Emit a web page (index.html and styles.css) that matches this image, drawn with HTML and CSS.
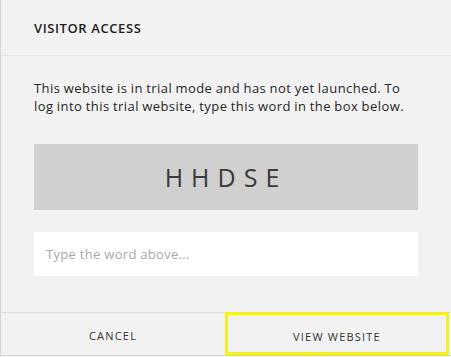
FILE: index.html
```html
<!DOCTYPE html>
<html>
  <head>
    <title>Visitor Access</title>
    <link rel="stylesheet" href="styles.css">
  </head>

  <body>
    <div class="dialog">
      <div class="dialog-header">
        <h2>VISITOR ACCESS</h2>
      </div>
      <div class="dialog-body">
        <p class="intro">
          This website is in trial mode and has not yet launched. To<br />
          log into this trial website, type this word in the box below.
        </p>
        <div class="captcha">HHDSE</div>
        <input
          type="text"
          class="word-input"
          name="word"
          placeholder="Type the word above..."
        />
      </div>
      <div class="dialog-footer">
        <button type="button" class="footer-button">CANCEL</button>
        <button type="button" class="footer-button active">VIEW WEBSITE</button>
      </div>
    </div>
  </body>
</html>
```

FILE: styles.css
```css
body {
  font-family: "Open Sans", "Lato", sans-serif;
  background-color: #f2f2f2;
  margin: 0;
}

.dialog {
  height: 356px;
  border-left: 1px solid #d4d4d4;
  background: #f2f2f2;
  display: flex;
  flex-direction: column;
  box-sizing: border-box;
}

.dialog-header {
  height: 56px;
  border-bottom: 1px solid #e2e2e2;
  padding-left: 33px;
  display: flex;
  align-items: center;
  box-sizing: border-box;
}

.dialog-header h2 {
  margin: 0;
  font-size: 13px;
  font-weight: 600;
  letter-spacing: 0.6px;
  color: #222;
}

.dialog-body {
  flex: 1;
  padding: 23px 33px 0 33px;
}

.intro {
  margin: 0 0 29px 0;
  font-size: 13px;
  line-height: 18px;
  letter-spacing: 0.45px;
  word-spacing: -0.5px;
  color: #262626;
}

.captcha {
  height: 66px;
  background: #d0d0d0;
  display: flex;
  justify-content: center;
  align-items: center;
  font-size: 25px;
  letter-spacing: 8px;
  color: #3a3a3a;
}

.word-input {
  display: block;
  width: 100%;
  height: 44px;
  margin-top: 22px;
  padding: 0 12px;
  border: none;
  background: white;
  box-sizing: border-box;
  font-family: inherit;
  font-size: 13px;
  letter-spacing: 0.3px;
  outline: none;
}

.word-input::placeholder {
  color: #a8a8a8;
}

.dialog-footer {
  display: grid;
  grid-template-columns: 1fr 1fr;
  height: 44px;
  padding-right: 2px;
  border-top: 1px solid #dcdcdc;
  border-bottom: 1px solid #d4d4d4;
  box-sizing: border-box;
}

.footer-button {
  background: transparent;
  border: none;
  padding: 3px 0 0 0;
  font-family: inherit;
  font-size: 11px;
  font-weight: 500;
  letter-spacing: 1.2px;
  color: #333;
  cursor: pointer;
}

.footer-button.active {
  margin-top: -1px;
  border: 3px solid #f5ee2a;
  padding-top: 5px;
}
```
